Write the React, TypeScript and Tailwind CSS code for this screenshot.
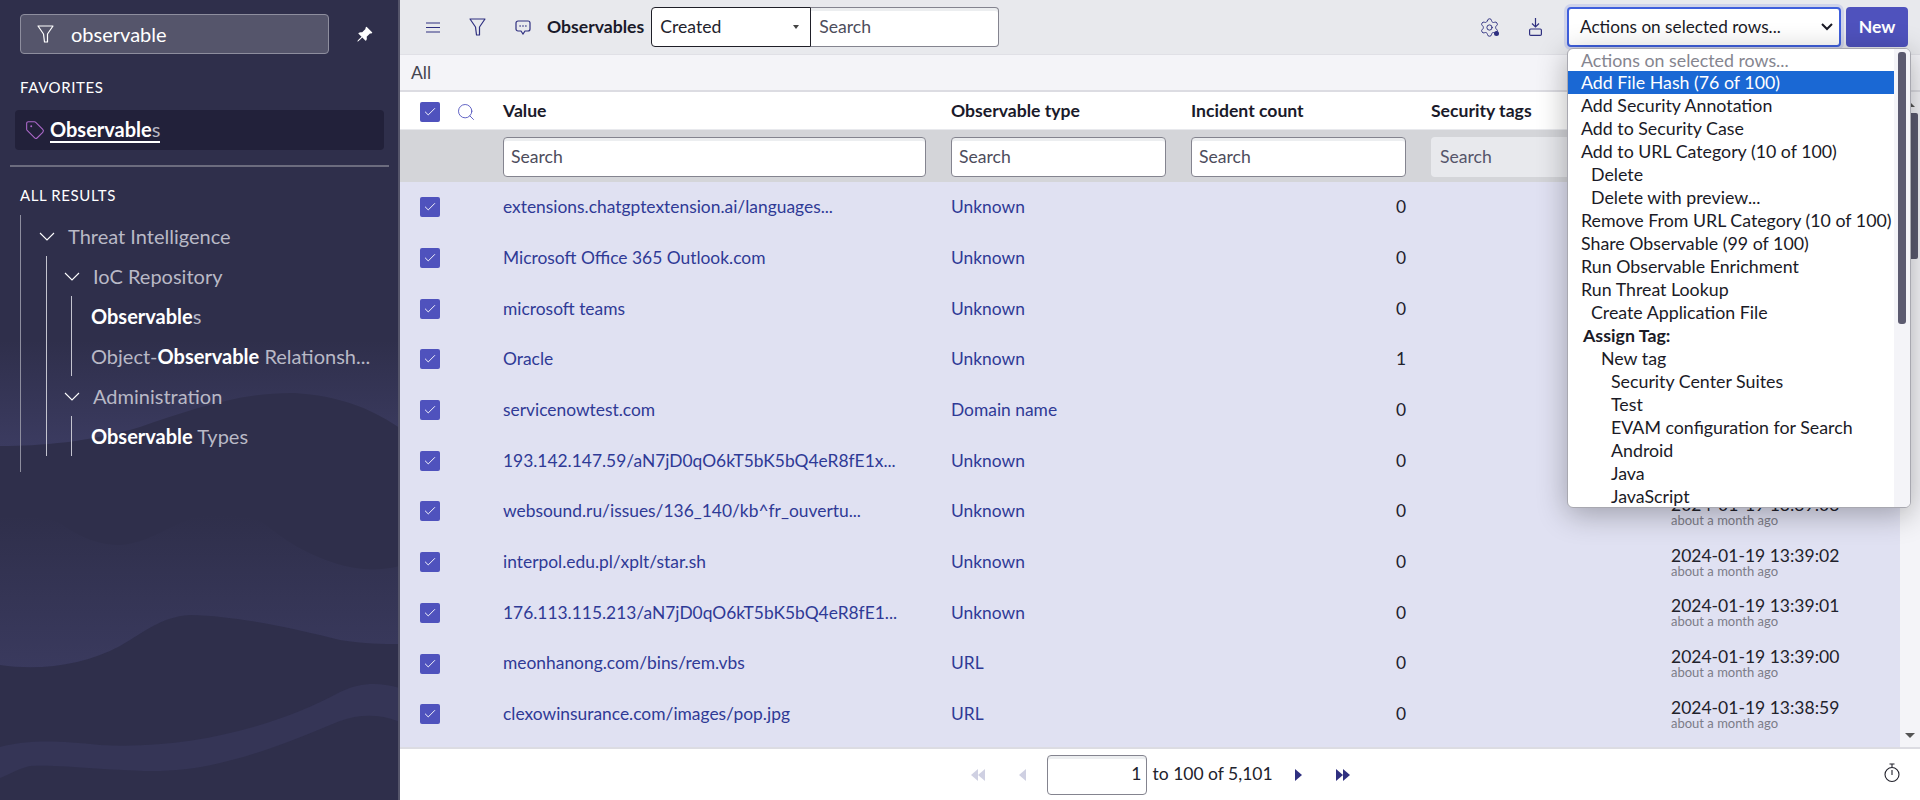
import type { ReactNode } from "react";
import { Check, Search, Settings, Tag } from "lucide-react";
import { BsPinAngleFill } from "react-icons/bs";

// first six rows have their date hidden behind the open actions menu
const ROWS = [
  { value: "extensions.chatgptextension.ai/languages...", type: "Unknown", count: 0, date: "" },
  { value: "Microsoft Office 365 Outlook.com", type: "Unknown", count: 0, date: "" },
  { value: "microsoft teams", type: "Unknown", count: 0, date: "" },
  { value: "Oracle", type: "Unknown", count: 1, date: "" },
  { value: "servicenowtest.com", type: "Domain name", count: 0, date: "" },
  { value: "193.142.147.59/aN7jD0qO6kT5bK5bQ4eR8fE1x...", type: "Unknown", count: 0, date: "" },
  { value: "websound.ru/issues/136_140/kb^fr_ouvertu...", type: "Unknown", count: 0, date: "2024-01-19 13:39:03" },
  { value: "interpol.edu.pl/xplt/star.sh", type: "Unknown", count: 0, date: "2024-01-19 13:39:02" },
  { value: "176.113.115.213/aN7jD0qO6kT5bK5bQ4eR8fE1...", type: "Unknown", count: 0, date: "2024-01-19 13:39:01" },
  { value: "meonhanong.com/bins/rem.vbs", type: "URL", count: 0, date: "2024-01-19 13:39:00" },
  { value: "clexowinsurance.com/images/pop.jpg", type: "URL", count: 0, date: "2024-01-19 13:38:59" },
];

const OPTIONS = [
  { label: "Add File Hash (76 of 100)", pad: "pl-[13px]", active: true },
  { label: "Add Security Annotation", pad: "pl-[13px]" },
  { label: "Add to Security Case", pad: "pl-[13px]" },
  { label: "Add to URL Category (10 of 100)", pad: "pl-[13px]" },
  { label: "Delete", pad: "pl-[23px]" },
  { label: "Delete with preview...", pad: "pl-[23px]" },
  { label: "Remove From URL Category (10 of 100)", pad: "pl-[13px]" },
  { label: "Share Observable (99 of 100)", pad: "pl-[13px]" },
  { label: "Run Observable Enrichment", pad: "pl-[13px]" },
  { label: "Run Threat Lookup", pad: "pl-[13px]" },
  { label: "Create Application File", pad: "pl-[23px]" },
  { label: "Assign Tag:", pad: "pl-[15px]", bold: true },
  { label: "New tag", pad: "pl-[33px]" },
  { label: "Security Center Suites", pad: "pl-[43px]" },
  { label: "Test", pad: "pl-[43px]" },
  { label: "EVAM configuration for Search", pad: "pl-[43px]" },
  { label: "Android", pad: "pl-[43px]" },
  { label: "Java", pad: "pl-[43px]" },
  { label: "JavaScript", pad: "pl-[43px]" },
];

function Checkbox() {
  return (
    <span className="flex h-5 w-5 items-center justify-center rounded-[2px] bg-[#4f52bd]">
      <Check size={14} strokeWidth={1.6} className="text-white" />
    </span>
  );
}

function FunnelIcon({ className }: { className: string }) {
  return (
    <svg width="17" height="18" viewBox="0 0 17 18" fill="none" stroke="currentColor" strokeWidth="1.2" className={className}>
      <path d="M1 1 H16 L10.5 9 V17 H7.5 L6.5 9 Z" strokeLinejoin="round" />
    </svg>
  );
}

function TreeChevron() {
  return (
    <svg width="16" height="9" viewBox="0 0 16 9" fill="none" stroke="white" strokeWidth="1.1" className="shrink-0">
      <path d="M1 1 L8 8 L15 1" />
    </svg>
  );
}

function Waves() {
  return (
    <svg viewBox="0 0 400 800" className="absolute left-0 top-0 h-[800px] w-[400px]">
      <defs>
        <linearGradient id="band" x1="0" y1="0" x2="0" y2="1">
          <stop offset="0" stopColor="#2f2f4b" />
          <stop offset="1" stopColor="#3a3a5e" />
        </linearGradient>
        <linearGradient id="topBand" x1="0" y1="0" x2="0" y2="1">
          <stop offset="0" stopColor="#2f2f4b" />
          <stop offset="1" stopColor="#3b3b60" />
        </linearGradient>
      </defs>
      <path d="M0 340 L400 340 L400 428 C370 408 340 396 295 393 C240 392 190 410 140 427 C90 442 40 446 0 446 Z" fill="url(#topBand)" />
      <path d="M0 517 C25 517 45 517 60 523 C80 538 100 545 120 545 C150 543 170 525 195 517 C215 514 245 514 262 522 C285 540 305 555 345 566 C365 571 385 570 400 566 L400 650 L0 670 Z" fill="url(#band)" />
      <path d="M0 665 C40 671 85 665 120 646 C145 632 160 617 190 615 C240 616 300 630 340 640 C365 644 385 644 400 644 L400 800 L0 800 Z" fill="#2f2f4b" />
      <path d="M0 747 C30 739 60 741 100 745 C190 750 280 725 340 692 C360 682 380 682 400 688 L400 722 C380 714 360 714 340 721 C270 750 220 769 160 771 C110 771 60 764 30 766 C20 768 10 774 0 778 Z" fill="#353556" />
    </svg>
  );
}

function Sidebar() {
  return (
    <aside className="relative h-full w-[400px] shrink-0 overflow-hidden border-r-2 border-[#55556a] bg-[#2f2f4b]">
      <Waves />
      <div className="relative flex flex-col">
        <div className="flex items-center pl-5 pt-[14px]">
          <div className="flex h-[40px] w-[309px] items-center rounded-[4px] border border-[#8e8e9e] bg-[#55556b] pl-4">
            <FunnelIcon className="text-white" />
            <span className="ml-[17px] text-[20px] text-white">observable</span>
          </div>
          <BsPinAngleFill size={17} className="ml-[27px] text-white" />
        </div>
        <div className="mt-6 pl-5 text-[15px] leading-[18px] tracking-[0.6px] text-white">FAVORITES</div>
        <div className="mx-[15px] mt-[14px] flex h-[40px] w-[369px] items-center rounded-[4px] bg-[#22213a] pl-[10px]">
          <Tag size={20} strokeWidth={1.3} className="text-[#ab68c9]" />
          <span className="ml-[5px] border-b-2 border-white text-[20px] leading-[24px] text-[#b5b5c2]">
            <b className="font-bold text-white">Observable</b>s
          </span>
        </div>
        <div className="mx-[10px] mt-[15px] h-[2px] w-[379px] bg-[#6c6c7e]" />
        <div className="mt-[19px] pl-5 text-[15px] leading-[18px] tracking-[0.6px] text-white">ALL RESULTS</div>
        <div className="ml-5 mt-[11px] w-fit border-l border-[#8e8e9e] pb-4 pl-[18px] pt-[1px]">
          <TreeHead label="Threat Intelligence" />
          <div className="ml-[7px] border-l border-[#c4c4cf] pl-[17px]">
            <TreeHead label="IoC Repository" />
            <div className="ml-[7px] border-l border-[#c4c4cf] pl-[19px]">
              <TreeLeaf><b className="font-bold text-white">Observable</b>s</TreeLeaf>
              <TreeLeaf>Object-<b className="font-bold text-white">Observable</b> Relationsh...</TreeLeaf>
            </div>
            <TreeHead label="Administration" />
            <div className="ml-[7px] border-l border-[#c4c4cf] pl-[19px]">
              <TreeLeaf><b className="font-bold text-white">Observable</b> Types</TreeLeaf>
            </div>
          </div>
        </div>
      </div>
    </aside>
  );
}

function TreeHead({ label }: { label: string }) {
  return (
    <div className="flex h-10 items-center text-[20px] text-[#b9b9c6]">
      <TreeChevron />
      <span className="ml-[13px]">{label}</span>
    </div>
  );
}

function TreeLeaf({ children }: { children: ReactNode }) {
  return (
    <div className="flex h-10 items-center whitespace-nowrap text-[20px] text-[#b9b9c6]">
      <span>{children}</span>
    </div>
  );
}

function TextBox({ className }: { className: string }) {
  return (
    <div className={"flex h-10 items-center rounded-[4px] border border-[#84848f] bg-white pl-[7px] text-[17.6px] text-[#4d4d5c] shadow-[inset_0_3px_0_#eceef0] " + className}>
      Search
    </div>
  );
}

function Toolbar() {
  return (
    <div className="flex h-[55px] items-center border-b border-[#e0e0e6] bg-[#e8e9ed] pl-[26px] pr-3">
      <svg width="14" height="11" viewBox="0 0 14 11" stroke="#2f3080" strokeWidth="1.2">
        <path d="M0 1 H14 M0 5.5 H14 M0 10 H14" />
      </svg>
      <FunnelIcon className="ml-[29px] text-[#2f3080]" />
      <svg width="16" height="15" viewBox="0 0 16 15" fill="none" stroke="#2f3080" strokeWidth="1.2" className="ml-[29px]">
        <path d="M3 1 H13 A2 2 0 0 1 15 3 V9 A2 2 0 0 1 13 11 H10 L8 14 L6 11 H3 A2 2 0 0 1 1 9 V3 A2 2 0 0 1 3 1 Z" />
        <path d="M4.5 6 H5.7 M7.4 6 H8.6 M10.3 6 H11.5" strokeWidth="1.7" />
      </svg>
      <span className="ml-[16px] text-[17.6px] font-bold text-[#1a1a2a]">Observables</span>
      <div className="ml-[7px] flex h-10 w-[160px] items-center justify-between rounded-l-[4px] border border-[#1f1f28] bg-white pl-2 pr-[11px] text-[17.6px] text-[#22222c]">
        Created
        <span className="h-0 w-0 border-x-[3.5px] border-t-[4px] border-x-transparent border-t-[#444]" />
      </div>
      <TextBox className="w-[188px] rounded-l-none border-l-0 pl-[8px]" />
      <span className="relative ml-auto flex">
        <Settings size={21} strokeWidth={1.1} className="text-[#2f3080]" />
        <span className="absolute bottom-[2px] right-[1px] h-[5px] w-[5px] rounded-full bg-[#2f3080]" />
      </span>
      <svg width="13" height="18" viewBox="0 0 13 18" fill="none" stroke="#2f3080" strokeWidth="1.2" className="ml-[29px]">
        <path d="M6.5 0 V9 M3 5.5 L6.5 9 L10 5.5" />
        <rect x="0.6" y="11" width="11.8" height="6.4" rx="1.2" />
      </svg>
      <div className="ml-[25px] flex h-10 w-[274px] items-center justify-between rounded-[4px] border-2 border-[#3f5fdc] bg-white pl-[11px] pr-[6px] text-[17.2px] text-[#1a1a26] shadow-[0_0_0_3px_#cfd3ea]">
        Actions on selected rows...
        <svg width="12" height="8" viewBox="0 0 12 8" fill="none" stroke="#1a1a26" strokeWidth="2">
          <path d="M1 1 L6 6 L11 1" />
        </svg>
      </div>
      <div className="ml-[5px] flex h-10 w-[62px] items-center justify-center rounded-[4px] bg-[#4f52bd] text-[17.6px] font-bold text-white">New</div>
    </div>
  );
}

function Table() {
  return (
    <div className="flex min-h-0 flex-1">
      <div className="min-w-0 flex-1 bg-[#e0e1f2]">
        <div className="flex h-[38px] items-center border-b border-[#e8e9ed] bg-white pt-[2px] text-[17.6px] font-bold text-[#1a1a2a]">
          <div className="flex w-[103px] items-center pl-5">
            <Checkbox />
            <Search size={20} strokeWidth={1.1} className="ml-4 text-[#5457c0]" />
          </div>
          <div className="w-[448px]">Value</div>
          <div className="w-[240px]">Observable type</div>
          <div className="w-[240px]">Incident count</div>
          <div>Security tags</div>
        </div>
        <div className="flex h-[52px] items-center bg-[#d4d5d9] pl-[103px] pt-[2px]">
          <TextBox className="w-[423px]" />
          <TextBox className="ml-[25px] w-[215px]" />
          <TextBox className="ml-[25px] w-[215px]" />
          <div className="ml-[25px] flex h-10 w-[215px] items-center rounded-[4px] bg-[#e8e9ed] pl-[9px] text-[17.6px] text-[#55556a]">Search</div>
        </div>
        <div>
          {ROWS.map((row) => (
            <div key={row.value} className="flex h-[50.7px] items-center text-[17.4px]">
              <div className="w-[103px] pl-5"><Checkbox /></div>
              <div className="w-[448px] whitespace-nowrap text-[#2f3a96]">{row.value}</div>
              <div className="w-[240px] text-[#2f3a96]">{row.type}</div>
              <div className="w-[215px] text-right text-[#22222c]">{row.count}</div>
              <div className="w-[265px]" />
              {row.date && (
                <div className="text-[#22222c]">
                  <div className="text-[17.5px] leading-[18px]">{row.date}</div>
                  <div className="text-[13px] leading-[13px] text-[#7c7c88]">about a month ago</div>
                </div>
              )}
            </div>
          ))}
        </div>
      </div>
      <div className="relative w-5 shrink-0 bg-[#f4f4f8]">
        <span className="absolute left-[5px] top-[10px] h-0 w-0 border-x-[5px] border-b-[5px] border-x-transparent border-b-[#555]" />
        <div className="mx-auto mt-[21px] h-[146px] w-4 rounded-[2px] bg-[#5c5b70]" />
        <span className="absolute bottom-[9px] left-[5px] h-0 w-0 border-x-[5px] border-t-[5px] border-x-transparent border-t-[#555]" />
      </div>
    </div>
  );
}

function TriLeft() {
  return <span className="h-0 w-0 border-y-[6px] border-r-[7.5px] border-y-transparent border-r-[#cfd0e2]" />;
}

function TriRight() {
  return <span className="h-0 w-0 border-y-[6px] border-l-[7.5px] border-y-transparent border-l-[#2f3080]" />;
}

function Pager() {
  return (
    <div className="relative flex h-[53px] items-center justify-center border-t-2 border-[#dcdce2] bg-white text-[17.5px] text-[#22222c]">
      <div className="flex items-center">
        <TriLeft />
        <TriLeft />
        <span className="ml-[34px] flex"><TriLeft /></span>
        <div className="ml-[21px] flex h-10 w-[100px] items-center justify-end rounded-[4px] border border-[#84848f] pr-1 shadow-[inset_0_3px_0_#eceef0]">1</div>
        <span className="ml-[6px] w-[119px] whitespace-nowrap">to 100 of 5,101</span>
        <span className="ml-[23px] flex"><TriRight /></span>
        <span className="ml-[34px] flex"><TriRight /><TriRight /></span>
      </div>
      <svg width="16" height="20" viewBox="0 0 16 20" fill="none" stroke="#22222c" strokeWidth="1.1" className="absolute right-[20px] top-[14px]">
        <path d="M5.5 1 H10.5 M8 1 V4 M8 7 V12" />
        <circle cx="8" cy="11.5" r="7" />
      </svg>
    </div>
  );
}

function ActionsMenu() {
  return (
    <div className="absolute left-[1567px] top-[48px] flex h-[460px] w-[344px] overflow-hidden rounded-[6px] border border-[#a8a8b0] bg-white text-[17.8px] leading-[23px] text-[#1a1a26] shadow-[0_6px_30px_rgba(0,0,0,0.3)]">
      <div className="flex-1 whitespace-nowrap">
        <div className="h-[22px] pl-[13px] leading-[22px] text-[#85858f]">Actions on selected rows...</div>
        {OPTIONS.map((opt) => (
          <div key={opt.label} className={"h-[23px] " + opt.pad + (opt.active ? " bg-[#1a68d4] text-white" : "") + (opt.bold ? " font-bold" : "")}>
            {opt.label}
          </div>
        ))}
      </div>
      <div className="w-4 shrink-0 bg-[#f4f4f8] pt-[3px]">
        <div className="mx-auto h-[272px] w-2 rounded-[3px] bg-[#5c5b70]" />
      </div>
    </div>
  );
}

export default function App() {
  return (
    <div className="relative flex h-[800px] w-[1920px] overflow-hidden font-['Lato',sans-serif]">
      <Sidebar />
      <main className="flex min-w-0 flex-1 flex-col bg-white">
        <Toolbar />
        <div className="flex h-[37px] items-center border-b-2 border-[#dcdce2] bg-[#f4f4f8] pl-[11px] pt-[2px] text-[17.5px] text-[#44444f]">All</div>
        <Table />
        <Pager />
      </main>
      <ActionsMenu />
    </div>
  );
}
